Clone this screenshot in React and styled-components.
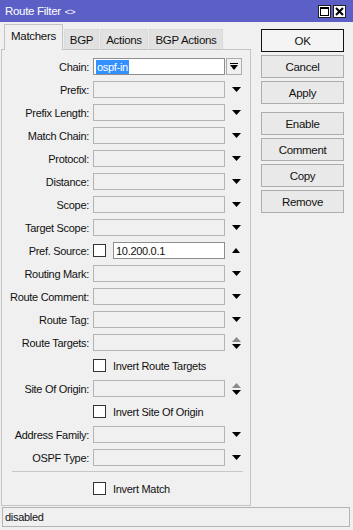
import React from "react";
import styled, { createGlobalStyle } from "styled-components";

const Global = createGlobalStyle`
  html, body { margin: 0; padding: 0; background: #f0f0f0; }
  body { font-family: "Liberation Sans", Arial, sans-serif; }
  * { box-sizing: border-box; }
`;

const Window = styled.div`
  width: 353px;
  height: 530px;
  background: #f0f0f0;
  display: flex;
  flex-direction: column;
  font-family: "Liberation Sans", Arial, sans-serif;
  font-size: 11px;
  letter-spacing: -0.3px;
  color: #111;
  overflow: hidden;
`;

const TitleBar = styled.div`
  height: 22px;
  flex: none;
  background: #5c5fc6;
  display: flex;
  align-items: center;
  padding: 0 7px 0 5px;
  color: #fff;
  font-size: 11.5px;
  letter-spacing: -0.3px;
`;

const Title = styled.span`
  flex: 1;
`;

const Mark = styled.span`
  font-size: 9.5px;
  margin-left: 4px;
`;

const TitleButtons = styled.div`
  display: flex;
  gap: 2px;
`;

const TitleButton = styled.div`
  width: 13px;
  height: 13px;
  background: #fff;
  border: 1px solid #222;
  display: flex;
  align-items: center;
  justify-content: center;
`;

const Body = styled.div`
  flex: 1;
  display: flex;
  padding: 3px 0 0 1px;
`;

const LeftCol = styled.div`
  width: 250px;
  display: flex;
  flex-direction: column;
`;

const Tabs = styled.div`
  height: 25px;
  display: flex;
  align-items: flex-end;
  padding-left: 3px;
  position: relative;
  z-index: 1;
  margin-bottom: -1px;
`;

const Tab = styled.div`
  width: ${(p) => p.$w}px;
  height: ${(p) => (p.$active ? 26 : 21)}px;
  margin-right: 1px;
  display: flex;
  align-items: ${(p) => (p.$active ? "flex-start" : "center")};
  padding-top: ${(p) => (p.$active ? 5 : 1)}px;
  justify-content: center;
  background: ${(p) => (p.$active ? "#f0f0f0" : "#e1e1e1")};
  border: 1px solid ${(p) => (p.$active ? "#c4c4c4" : "#dadada")};
  border-bottom: ${(p) => (p.$active ? "none" : "1px solid #c4c4c4")};
  font-size: 11.5px;
`;

const Panel = styled.div`
  height: 457px;
  border: 1px solid #c4c4c4;
  background: #f0f0f0;
  padding-top: 5px;
  display: flex;
  flex-direction: column;
`;

const Row = styled.div`
  height: 23px;
  display: grid;
  grid-template-columns: 87px 132px 17px;
  column-gap: 4px;
  align-items: center;
  & > :nth-child(3) {
    margin-left: -3px;
  }
`;

const Label = styled.div`
  text-align: right;
  white-space: nowrap;
`;

const Field = styled.div`
  height: 17px;
  border: 1px solid ${(p) => (p.$white ? "#8e8e8e" : "#b4b4b4")};
  background: ${(p) => (p.$white ? "#fff" : "#f0f0f0")};
  display: flex;
  align-items: center;
  padding-left: ${(p) => (p.$white ? 2 : 3)}px;
  flex: 1;
  min-width: 0;
`;

const Selected = styled.span`
  background: #3390ff;
  color: #fff;
  padding: 0 1px;
  line-height: 14px;
`;

const Inline = styled.div`
  display: flex;
  align-items: center;
  gap: 7px;
  white-space: nowrap;
`;

const Check = styled.div`
  width: 13px;
  height: 13px;
  flex: none;
  border: 1px solid #333;
  background: #fff;
`;

const ArrowCell = styled.div`
  display: flex;
  align-items: center;
  justify-content: center;
  height: 17px;
`;

const ComboButton = styled.div`
  width: 16px;
  height: 17px;
  border: 1px solid #adadad;
  background: #f0f0f0;
  display: flex;
  align-items: center;
  justify-content: center;
`;

const Separator = styled.div`
  height: 1px;
  background: #c8c8c8;
  margin: 2px 7px 5px 10px;
`;

const RightCol = styled.div`
  width: 83px;
  margin-left: 10px;
  padding-top: 4px;
  display: flex;
  flex-direction: column;
`;

const Group = styled.div`
  display: flex;
  flex-direction: column;
  gap: 3px;
  margin-bottom: 8px;
`;

const Button = styled.div`
  height: 23px;
  border: 1px solid ${(p) => (p.$default ? "#111" : "#adadad")};
  background: ${(p) => (p.$default ? "#f4f4f4" : "#e9e9e9")};
  display: flex;
  align-items: center;
  justify-content: center;
  font-size: 11.5px;
`;

const StatusBar = styled.div`
  height: 20px;
  margin: 1px 3px 3px 2px;
  border: 1px solid #b4b4b4;
  display: flex;
  align-items: center;
  padding-left: 2px;
  flex: none;
`;

const Down = () => (
  <svg width="9" height="5" viewBox="0 0 9 5">
    <polygon points="0,0 9,0 4.5,5" fill="#000" />
  </svg>
);

const Up = () => (
  <svg width="8" height="5" viewBox="0 0 8 5">
    <polygon points="0,5 8,5 4,0" fill="#000" />
  </svg>
);

const UpDown = () => (
  <svg width="9" height="12" viewBox="0 0 9 12">
    <polygon points="0,5 9,5 4.5,0" fill="#8a8a8a" />
    <polygon points="0,7 9,7 4.5,12" fill="#000" />
  </svg>
);

const ComboIcon = () => (
  <svg width="8" height="7" viewBox="0 0 8 7">
    <rect x="0" y="0" width="8" height="1" fill="#000" />
    <polygon points="0,2 8,2 4,7" fill="#000" />
  </svg>
);

const rows = [
  { label: "Chain:", kind: "chain" },
  { label: "Prefix:" },
  { label: "Prefix Length:" },
  { label: "Match Chain:" },
  { label: "Protocol:" },
  { label: "Distance:" },
  { label: "Scope:" },
  { label: "Target Scope:" },
  { label: "Pref. Source:", kind: "pref" },
  { label: "Routing Mark:" },
  { label: "Route Comment:" },
  { label: "Route Tag:" },
  { label: "Route Targets:", arrow: "updown" },
  { check: "Invert Route Targets" },
  { label: "Site Of Origin:", arrow: "updown" },
  { check: "Invert Site Of Origin" },
  { label: "Address Family:" },
  { label: "OSPF Type:" },
];

function FormRow({ r }) {
  if (r.check) {
    return (
      <Row>
        <span />
        <Inline>
          <Check />
          <span>{r.check}</span>
        </Inline>
      </Row>
    );
  }
  let field;
  let arrow;
  if (r.kind === "chain") {
    field = (
      <Field $white>
        <Selected>ospf-in</Selected>
      </Field>
    );
    arrow = (
      <ComboButton>
        <ComboIcon />
      </ComboButton>
    );
  } else if (r.kind === "pref") {
    field = (
      <Inline>
        <Check />
        <Field $white>10.200.0.1</Field>
      </Inline>
    );
    arrow = (
      <ArrowCell>
        <Up />
      </ArrowCell>
    );
  } else {
    field = <Field />;
    arrow = <ArrowCell>{r.arrow === "updown" ? <UpDown /> : <Down />}</ArrowCell>;
  }
  return (
    <Row>
      <Label>{r.label}</Label>
      {field}
      {arrow}
    </Row>
  );
}

export default function App() {
  return (
    <>
      <Global />
      <Window>
        <TitleBar>
          <Title>
            Route Filter<Mark>&lt;&gt;</Mark>
          </Title>
          <TitleButtons>
            <TitleButton>
              <svg width="9" height="9" viewBox="0 0 9 9">
                <rect x="0.5" y="0.5" width="8" height="8" fill="none" stroke="#000" />
                <rect x="0" y="0" width="9" height="2" fill="#000" />
              </svg>
            </TitleButton>
            <TitleButton>
              <svg width="9" height="9" viewBox="0 0 9 9">
                <path d="M1 1 L8 8 M8 1 L1 8" stroke="#000" strokeWidth="2" />
              </svg>
            </TitleButton>
          </TitleButtons>
        </TitleBar>
        <Body>
          <LeftCol>
            <Tabs>
              <Tab $active $w={59}>Matchers</Tab>
              <Tab $w={35}>BGP</Tab>
              <Tab $w={48}>Actions</Tab>
              <Tab $w={74}>BGP Actions</Tab>
            </Tabs>
            <Panel>
              {rows.map((r, i) => (
                <FormRow key={i} r={r} />
              ))}
              <Separator />
              <FormRow r={{ check: "Invert Match" }} />
            </Panel>
          </LeftCol>
          <RightCol>
            <Group>
              <Button $default>OK</Button>
              <Button>Cancel</Button>
              <Button>Apply</Button>
            </Group>
            <Group>
              <Button>Enable</Button>
              <Button>Comment</Button>
              <Button>Copy</Button>
              <Button>Remove</Button>
            </Group>
          </RightCol>
        </Body>
        <StatusBar>disabled</StatusBar>
      </Window>
    </>
  );
}
